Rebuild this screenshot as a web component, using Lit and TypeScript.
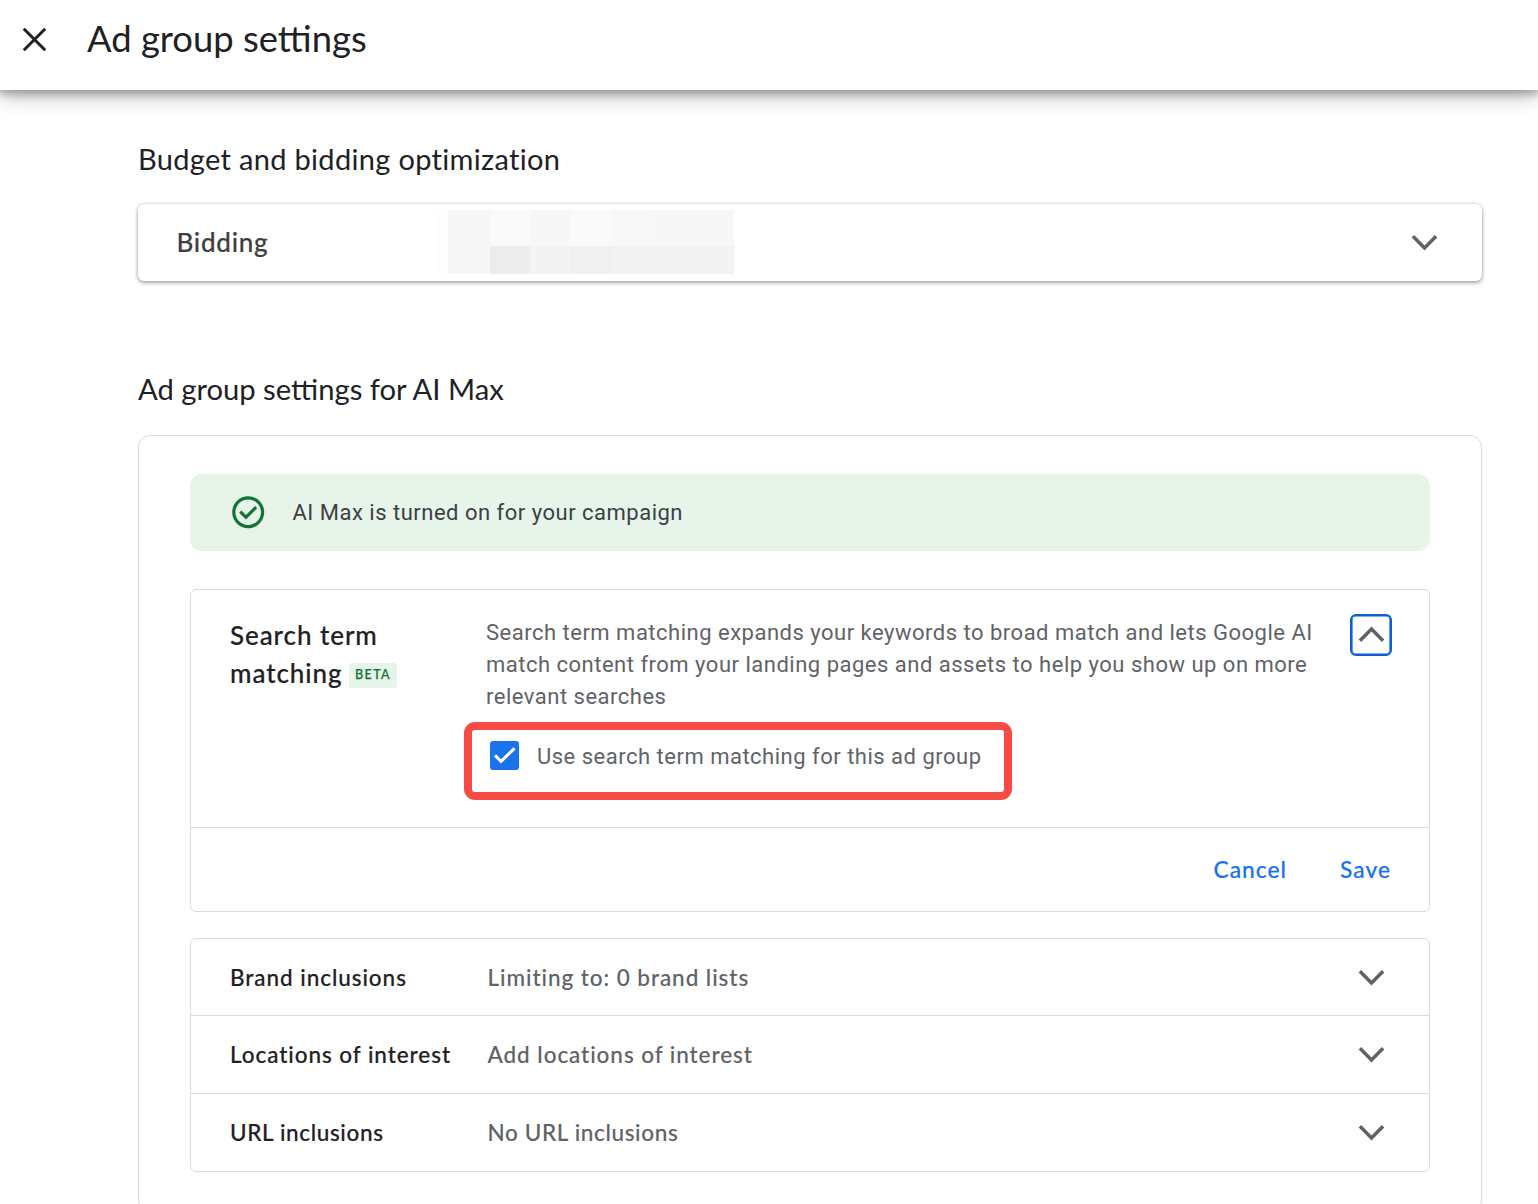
import { LitElement, html, css, svg } from "lit";
import { customElement, property } from "lit/decorators.js";
import { classMap } from "lit/directives/class-map.js";

const ICONS = {
  close: svg`<path class="stroke" d="M5.4 5.4 18.6 18.6M18.6 5.4 5.4 18.6" stroke-width="1.85"/>`,
  down: svg`<path class="stroke" d="M6.55 9.1 12 14.55 17.45 9.1" stroke-width="1.65"/>`,
  up: svg`<path class="stroke" d="M6.55 14.9 12 9.45 17.45 14.9" stroke-width="1.65"/>`,
  ok: svg`<path d="m10.6 16.6 7.05-7.05-1.4-1.4-5.65 5.65-2.85-2.85-1.4 1.4zM12 22C6.48 22 2 17.52 2 12S6.48 2 12 2s10 4.48 10 10-4.48 10-10 10zm0-2c4.42 0 8-3.58 8-8s-3.58-8-8-8-8 3.58-8 8 3.58 8 8 8z" fill-rule="evenodd"/>`,
};

@customElement("ui-icon")
class UiIcon extends LitElement {
  @property() name: keyof typeof ICONS = "down";
  static styles = css`
    :host { display: block; flex: none; }
    svg { display: block; width: 100%; height: 100%; fill: currentColor; }
    .stroke { fill: none; stroke: currentColor; }
  `;
  render() {
    return html`<svg viewBox="0 0 24 24" aria-hidden="true">${ICONS[this.name]}</svg>`;
  }
}

const REDACTED = [
  "a", "b", "a", "b", "c", "a", "a",
  "a", "d", "e", "f", "g", "g", "g",
];

const ROWS = [
  { label: "Brand inclusions", value: "Limiting to: 0 brand lists", tight: false },
  { label: "Locations of interest", value: "Add locations of interest", tight: false },
  { label: "URL inclusions", value: "No URL inclusions", tight: true },
];

@customElement("app-root")
class AppRoot extends LitElement {
  static styles = css`
    :host {
      display: flex; flex-direction: column; height: 1204px; overflow: hidden;
      background: #fff; color: #202124; font-family: Lato, "Open Sans", sans-serif;
    }
    * { box-sizing: border-box; }
    h1, h2, h3, p { margin: 0; font-weight: 400; }
    .header {
      flex: none; height: 90px; padding: 0 0 12px 15px; display: flex; align-items: center;
      position: relative; background: #fff;
      box-shadow: 0 4px 20px rgba(0, 0, 0, .34), 0 2px 8px 2px rgba(0, 0, 0, .22);
    }
    .close { width: 39px; height: 39px; color: #202124; margin-top: 0; }
    .title { margin: -3px 0 0 33px; font-size: 36.4px; line-height: 44px; }
    .main { flex: none; padding: 51px 56px 0 138px; }
    .heading { font-size: 29.2px; line-height: 36px; white-space: nowrap; }
    .heading.wide { font-size: 29px; letter-spacing: .32px; }
    .bidding {
      margin: 27px 0 90px; height: 77px; border-radius: 6px; padding: 0 32px 0 38.5px;
      display: flex; align-items: center;
      box-shadow: 0 2px 4px rgba(0, 0, 0, .32), 0 0 3px rgba(0, 0, 0, .2);
    }
    .bidding-label { width: 257.5px; font-size: 26px; font-weight: 500; letter-spacing: .74px; color: #3c4043; line-height: 32px; margin-top: -2px; -webkit-text-stroke: .18px #3c4043; }
    .mosaic {
      display: grid; grid-template-columns: 42px 40px 40px 42px 41px 41px 40px; grid-template-rows: 36px 28px;
      border-left: 14px solid #fdfdfd; margin-top: -1px;
    }
    .a { background: #f7f7f7; } .b { background: #fafafa; } .c { background: #f8f8f8; }
    .d { background: #ededed; } .e { background: #f3f3f3; } .f { background: #f0f0f0; } .g { background: #f2f2f2; }
    .chev { width: 51px; height: 51px; color: #5f6368; margin-left: auto; }
    .panel {
      margin-top: 28px; width: 1344px; height: 777px; border: 1px solid #dadce0; border-radius: 12px;
      padding: 38px 51px;
    }
    .banner {
      height: 77px; border-radius: 12px; background: #e6f4ea; display: flex; align-items: center;
      padding-left: 38.6px; font: 22px/32px Roboto, sans-serif; letter-spacing: .5px; color: #3c4043;
    }
    .ok { width: 38.4px; height: 38.4px; color: #137333; margin: -1.5px 25.5px 0 0; }
    .card { margin-top: 38px; border: 1px solid #dadce0; border-radius: 6px; }
    .expanded { height: 237px; display: flex; padding: 24px 37px 0 39px; align-items: flex-start; }
    .term { width: 256px; flex: none; padding-top: 2px; font-size: 26px; font-weight: 500; line-height: 38px; letter-spacing: .93px; -webkit-text-stroke: .18px #202124; }
    .line { display: flex; align-items: center; }
    .beta {
      margin: 4px 0 0 6px; width: 48px; height: 25px; border-radius: 3px; background: #e6f4ea; color: #137333;
      font-size: 12.5px; font-weight: 500; line-height: 24px; letter-spacing: 1.4px; padding-left: 6.5px;
      -webkit-text-stroke: .25px #137333;
    }
    .detail { width: 860px; flex: none; padding-top: 3px; font: 22px/32px Roboto, sans-serif; letter-spacing: .5px; color: #5f6368; position: relative; }
    .detail p { white-space: nowrap; }
    .option { display: flex; align-items: center; gap: 18px; margin: 28px 0 0 4px; }
    .box { display: block; width: 29px; height: 29px; border-radius: 3px; background: #1a73e8; margin-top: -3px; }
    .box path { fill: none; stroke: #fff; stroke-width: 3.1; }
    .mark { position: absolute; left: -22px; top: 108px; width: 548px; height: 78px; border: 8px solid #f74b46; border-radius: 11px; pointer-events: none; }
    .toggle {
      margin-left: auto; width: 42px; height: 42px; border: 2px solid #0b5ed7; border-radius: 6px; background: none;
      box-shadow: inset 0 0 0 .6px #0b5ed7;
      display: flex; align-items: center; justify-content: center; padding: 0; color: #5f6368;
    }
    .toggle ui-icon { width: 51px; height: 51px; margin-top: -1px; }
    .actions {
      height: 84px; border-top: 1px solid #dadce0; display: flex; justify-content: flex-end; gap: 53px;
      padding: 25px 38px 0 0; font-size: 22.8px; font-weight: 500; line-height: 32px; letter-spacing: 1px; color: #1a73e8;
      -webkit-text-stroke: .18px #1a73e8;
    }
    .list { margin-top: 26px; }
    .row {
      height: 78px; display: flex; align-items: center; padding: 0 32.5px 0 39px;
      font-size: 22.5px; font-weight: 500; letter-spacing: .94px; border-bottom: 1px solid #dadce0;
    }
    .row:first-child { height: 77px; }
    .row:last-child { border-bottom: 0; height: 77px; }
    .row.tight { letter-spacing: .64px; }
    .name { width: 257.5px; -webkit-text-stroke: .18px #202124; }
    .value { color: #5f6368; -webkit-text-stroke: .12px #5f6368; }
    .row span { line-height: 30px; margin-top: 1px; white-space: nowrap; }
  `;

  render() {
    return html`
      <header class="header">
        <ui-icon class="close" name="close"></ui-icon>
        <h1 class="title">Ad group settings</h1>
      </header>
      <main class="main">
        <h2 class="heading wide">Budget and bidding optimization</h2>
        <section class="bidding">
          <h3 class="bidding-label">Bidding</h3>
          <div class="mosaic">${REDACTED.map((c) => html`<i class=${c}></i>`)}</div>
          <ui-icon class="chev" name="down"></ui-icon>
        </section>
        <h2 class="heading">Ad group settings for AI Max</h2>
        <section class="panel">
          <div class="banner"><ui-icon class="ok" name="ok"></ui-icon>AI Max is turned on for your campaign</div>
          <div class="card">
            <div class="expanded">
              <h3 class="term">
                <div>Search term</div>
                <div class="line">matching<span class="beta">BETA</span></div>
              </h3>
              <div class="detail">
                <p>Search term matching expands your keywords to broad match and lets Google AI<br />match content from your landing pages and assets to help you show up on more<br />relevant searches</p>
                <div class="option">
                  <svg class="box" viewBox="0 0 29 29"><path d="M4.9 14.3 11.1 20.3 24.5 7.3" /></svg>
                  <span>Use search term matching for this ad group</span>
                </div>
                <div class="mark"></div>
              </div>
              <button class="toggle" aria-label="Collapse"><ui-icon name="up"></ui-icon></button>
            </div>
            <div class="actions"><span>Cancel</span><span>Save</span></div>
          </div>
          <div class="card list">
            ${ROWS.map((r) => html`
              <div class=${classMap({ row: true, tight: r.tight })}>
                <span class="name">${r.label}</span>
                <span class="value">${r.value}</span>
                <ui-icon class="chev" name="down"></ui-icon>
              </div>`)}
          </div>
        </section>
      </main>
    `;
  }
}
